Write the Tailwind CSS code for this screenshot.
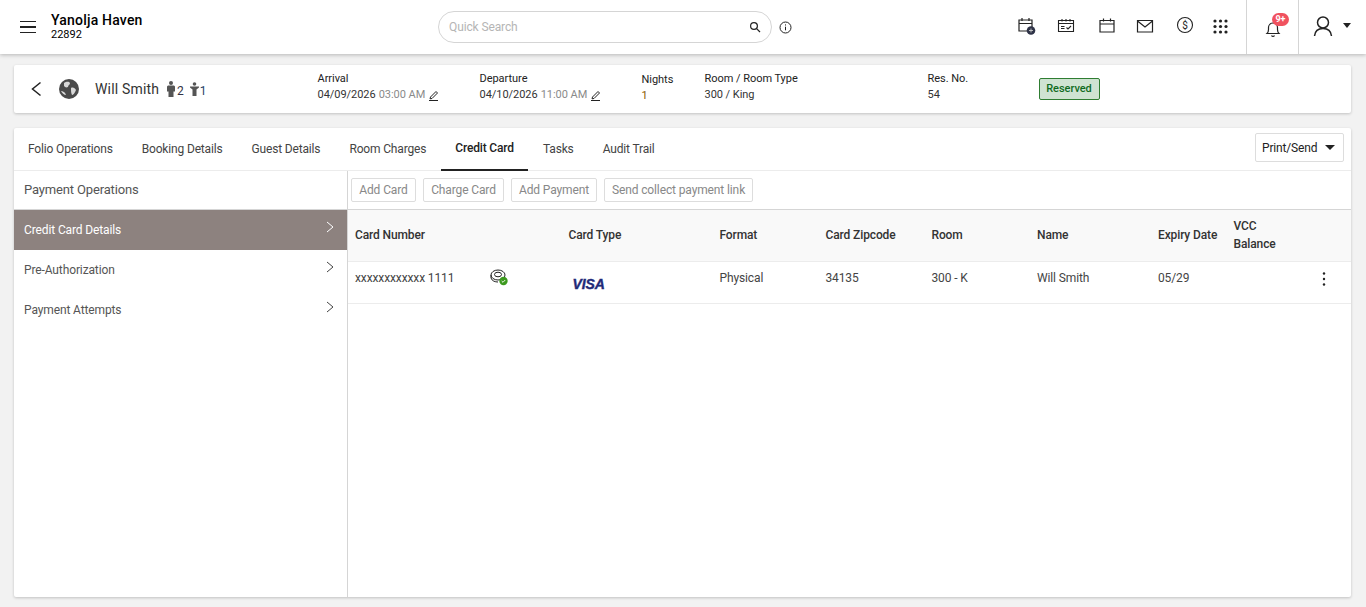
<!DOCTYPE html>
<html lang="en">
<head>
<meta charset="utf-8">
<title>Credit Card</title>
<script src="https://cdn.jsdelivr.net/npm/@tailwindcss/browser@4"></script>
</head>
<body class="h-[607px] w-[1366px] overflow-hidden bg-[#f2f2f2] font-['Roboto',sans-serif] text-[#333]">
<header class="relative z-10 flex h-[54px] items-center bg-white shadow-[0_1px_4px_rgba(0,0,0,0.25)]">
  <button class="ml-5 flex h-5 w-4 flex-col justify-center gap-[4px]">
    <span class="h-[1.5px] w-4 bg-[#222]"></span><span class="h-[1.5px] w-4 bg-[#222]"></span><span class="h-[1.5px] w-4 bg-[#222]"></span>
  </button>
  <div class="ml-[15px] w-[387px] leading-none text-black">
    <div class="text-[14px] font-medium leading-[16px] tracking-[0.2px]">Yanolja Haven</div>
    <div class="text-[11px] leading-[14px]">22892</div>
  </div>
  <div class="flex h-[32px] w-[334px] items-center justify-between rounded-full border border-[#d5d5d5] px-[10px] text-[12px] tracking-[-0.12px] text-[#b5b5b5]">
    <span>Quick Search</span>
    <svg width="12" height="12" viewBox="0 0 12 12" fill="none" stroke="#222" stroke-width="1.2"><circle cx="5" cy="5" r="3.4"/><path d="M7.6 7.6 11 11"/></svg>
  </div>
  <svg class="ml-[7px]" width="13" height="13" viewBox="0 0 13 13" fill="none" stroke="#222"><circle cx="6.5" cy="6.5" r="5.5"/><path d="M6.5 5.7v3.6M6.5 3.4v1.1"/></svg>
  <div class="-mt-[2px] ml-[226px] flex items-center">
    <svg width="18" height="18" viewBox="0 0 18 18" fill="none" stroke="#222" stroke-width="1.2"><path d="M1 3h13v11H1zM1 6.5h13M4 1v3M11 1v3"/><circle cx="13" cy="13.5" r="4.3" fill="#2f3347" stroke="none"/><path d="M11 13.5h4M13 11.5v4" stroke="#ccc" stroke-width=".9"/></svg>
    <svg class="ml-[21px]" width="18" height="18" viewBox="0 0 18 18" fill="none" stroke="#222" stroke-width="1.1"><path d="M1.5 3.5h15v11h-15zM1.5 6.5h15M5 2v2.5M9 2v2.5M13 2v2.5M4 9.5h3.5M4 11.5h3.5M9.5 10.5l1.500 1.500 3-3"/></svg>
    <svg class="ml-[23px]" width="18" height="18" viewBox="0 0 18 18" fill="none" stroke="#222" stroke-width="1.2"><path d="M2 3.5h14V15H2zM2 7h14M5.5 1.5v3M12.5 1.5v3"/></svg>
    <svg class="ml-[20px]" width="18" height="18" viewBox="0 0 18 18" fill="none" stroke="#222" stroke-width="1.2"><path d="M1.5 3.5h15V15h-15zM1.5 4 9 10l7.500-6"/></svg>
    <svg class="-mt-[2px] ml-[22px]" width="18" height="18" viewBox="0 0 18 18" fill="none" stroke="#222" stroke-width="1.1"><circle cx="9" cy="9" r="7.5"/><text x="9" y="12.5" text-anchor="middle" font-size="10" fill="#222" stroke="none" font-family="Roboto">$</text></svg>
    <svg class="ml-[19px]" width="15" height="15" viewBox="0 0 15 15" fill="#222"><circle cx="2" cy="2" r="1.6"/><circle cx="7.5" cy="2" r="1.6"/><circle cx="13" cy="2" r="1.6"/><circle cx="2" cy="7.5" r="1.6"/><circle cx="7.5" cy="7.5" r="1.6"/><circle cx="13" cy="7.5" r="1.6"/><circle cx="2" cy="13" r="1.6"/><circle cx="7.5" cy="13" r="1.6"/><circle cx="13" cy="13" r="1.6"/></svg>
  </div>
  <div class="relative ml-[18px] flex h-[54px] w-[53px] items-center justify-center border-x border-[#d5d5d5]">
    <svg class="mt-[4px]" width="16" height="18" viewBox="0 0 16 18" fill="none" stroke="#222" stroke-width="1.2"><path d="M2 13.5c1-1 1.500-2 1.500-4v-2a4.500 4.500 0 0 1 9 0v2c0 2 .5 3 1.500 4zM6.500 15.500a1.700 1.700 0 0 0 3 0"/></svg>
    <span class="absolute left-[25px] top-[13px] flex h-[13px] w-[17px] items-center justify-center rounded-full bg-[#f0525f] text-[9px] font-bold leading-none text-white">9+</span>
  </div>
  <div class="ml-[14px] flex items-center gap-[10px]">
    <svg class="-mt-[2px]" width="20" height="22" viewBox="0 0 20 22" fill="none" stroke="#222" stroke-width="1.5"><circle cx="10" cy="7.5" r="5.5"/><path d="M1.500 21c.5-5 4-7.500 8.500-7.500s8 2.500 8.500 7.500"/></svg>
    <span class="-mt-[3px] h-0 w-0 border-x-[4px] border-t-[5px] border-x-transparent border-t-[#222]"></span>
  </div>
</header>

<section class="ml-[14px] mr-[15px] mt-[11px] flex h-[48px] items-center rounded-[2px] bg-white text-[11px] leading-[16px] tracking-[-0.04px] shadow-[0_1px_3px_rgba(0,0,0,0.2)]">
  <svg class="ml-[16px]" width="12" height="16" viewBox="0 0 12 16" fill="none" stroke="#222" stroke-width="1.5"><path d="M10.500 1.500 2.500 8l8 6.500"/></svg>
  <svg class="ml-[17px]" width="20" height="20" viewBox="0 0 20 20"><circle cx="10" cy="10" r="10" fill="#4a4a4a"/><path d="M5 4c2-1.500 5-2 6 0 0 2-2 2-2 4-2 1-3 0-4-1zM12 9c2-1 4 0 5 2-1 3-3 5-4 5-1-2-1-4-1-7zM2 12c2 0 4 1 5 4-2 0-4-2-5-4z" fill="#d8d8d8"/></svg>
  <div class="ml-[16px] w-[222.5px] text-[#333]">
    <div class="flex items-center">
      <span class="text-[14px] tracking-[0.17px]">Will Smith</span>
      <svg class="ml-[7px]" width="10" height="16" viewBox="0 0 10 16" fill="#555"><circle cx="5" cy="2" r="2"/><path d="M2 4.500h6l1 1v5H7.500V16h-5v-5.500H1v-5z"/></svg>
      <span class="ml-[1px] mt-[3px] text-[12px] text-[#334]">2</span>
      <svg class="ml-[6px]" width="9" height="14" viewBox="0 0 9 14" fill="#555"><circle cx="4.500" cy="2" r="1.800"/><path d="M0 4.500h9v1L6.500 7.500V14h-4V7.500L0 5.500z"/></svg>
      <span class="ml-[1px] mt-[3px] text-[12px] text-[#1f3f66]">1</span>
    </div>
  </div>
  <div class="mb-[5px] w-[162px]">
    <div class="text-[#222]">Arrival</div>
    <div class="flex items-center text-[#333]">04/09/2026 <span class="ml-[3px] text-[#8a8a8a]">03:00 AM</span>
      <svg class="ml-[3px]" width="12" height="12" viewBox="0 0 12 12" fill="none" stroke="#222"><path d="M2.500 8 8 2.500 9.500 4 4 9.500l-2 .3zM1 11.500h9"/></svg>
    </div>
  </div>
  <div class="mb-[5px] w-[162px]">
    <div class="text-[#222]">Departure</div>
    <div class="flex items-center text-[#333]">04/10/2026 <span class="ml-[3px] text-[#8a8a8a]">11:00 AM</span>
      <svg class="ml-[3px]" width="12" height="12" viewBox="0 0 12 12" fill="none" stroke="#222"><path d="M2.500 8 8 2.500 9.500 4 4 9.500l-2 .3zM1 11.500h9"/></svg>
    </div>
  </div>
  <div class="mb-[2px] w-[63px]">
    <div class="text-[#222]">Nights</div>
    <div class="text-[#8a5a00]">1</div>
  </div>
  <div class="mb-[5px] w-[223px]">
    <div class="text-[#222]">Room / Room Type</div>
    <div>300 / King</div>
  </div>
  <div class="mb-[5px] w-[111px]">
    <div class="text-[#222]">Res. No.</div>
    <div>54</div>
  </div>
  <span class="flex h-[22px] w-[61px] items-center justify-center rounded-[2px] border border-[#2f7d32] bg-[#cfe3d2] font-medium text-[#0f6b1f]">Reserved</span>
</section>

<main class="ml-[14px] mr-[15px] mt-[15px] flex h-[469px] flex-col rounded-[2px] bg-white text-[12px] tracking-[-0.12px] shadow-[0_1px_3px_rgba(0,0,0,0.2)]">
  <nav class="flex h-[43px] shrink-0 items-center border-b border-[#ececec] pl-[14px] pr-[7px] tracking-[-0.16px] text-[#444]">
    <a class="mr-[29px]">Folio Operations</a>
    <a class="mr-[29px]">Booking Details</a>
    <a class="mr-[29px]">Guest Details</a>
    <a class="mr-[29px]">Room Charges</a>
    <a class="-mx-[14px] mr-[15px] flex h-[43px] items-center border-b-2 border-[#222] px-[14px] font-medium text-[#222]">Credit Card</a>
    <a class="mr-[29px]">Tasks</a>
    <a>Audit Trail</a>
    <button class="-mt-[3px] ml-auto flex h-[29px] w-[89px] items-center justify-between rounded-[2px] border border-[#ddd] px-[6px] text-[#222]">Print/Send<span class="mr-[2px] h-0 w-0 border-x-[5px] border-t-[5px] border-x-transparent border-t-[#222]"></span></button>
  </nav>
  <div class="flex min-h-0 flex-1">
    <aside class="w-[334px] shrink-0 border-r border-[#d5d5d5] text-[#555]">
      <div class="flex h-[39px] items-center border-b border-[#d5d5d5] pl-[10px] text-[13px] tracking-[-0.15px]">Payment Operations</div>
      <div class="flex h-[40px] items-center justify-between bg-[#8d827f] pl-[10px] pr-[13px] text-white">Credit Card Details<svg class="-mt-[6px]" width="8" height="12" viewBox="0 0 8 12" fill="none" stroke="#fff"><path d="m1 1 6 5-6 5"/></svg></div>
      <div class="flex h-[40px] items-center justify-between pl-[10px] pr-[13px]">Pre-Authorization<svg class="-mt-[6px]" width="8" height="12" viewBox="0 0 8 12" fill="none" stroke="#444"><path d="m1 1 6 5-6 5"/></svg></div>
      <div class="flex h-[40px] items-center justify-between pl-[10px] pr-[13px]">Payment Attempts<svg class="-mt-[6px]" width="8" height="12" viewBox="0 0 8 12" fill="none" stroke="#444"><path d="m1 1 6 5-6 5"/></svg></div>
    </aside>
    <div class="min-w-0 flex-1">
      <div class="flex h-[39px] items-center gap-[7px] border-b border-[#d5d5d5] pl-[3px] text-[#888]">
        <button class="h-[24px] w-[65px] rounded-[2px] border border-[#ddd]">Add Card</button>
        <button class="h-[24px] w-[81px] rounded-[2px] border border-[#ddd]">Charge Card</button>
        <button class="h-[24px] w-[86px] rounded-[2px] border border-[#ddd]">Add Payment</button>
        <button class="h-[24px] w-[149px] rounded-[2px] border border-[#ddd]">Send collect payment link</button>
      </div>
      <div class="grid h-[52px] grid-cols-[213.5px_151px_106px_106px_105.5px_121px_75.5px_1fr] items-center border-b border-[#ececec] bg-[#f9f9f9] pb-[2px] font-medium leading-[18px] text-[#333] [&>div]:pl-[7px]">
        <div>Card Number</div><div>Card Type</div><div>Format</div><div>Card Zipcode</div><div>Room</div><div>Name</div><div>Expiry Date</div><div>VCC<br>Balance</div>
      </div>
      <div class="grid h-[42px] grid-cols-[213.5px_151px_106px_106px_105.5px_121px_75.5px_1fr] items-center border-b border-[#ececec] text-[#444] [&>div]:pl-[7px]">
        <div class="relative -mt-[9px]">xxxxxxxxxxxx 1111
          <svg class="absolute left-[142px] top-[-1px]" width="19" height="19" viewBox="0 0 19 19" fill="none" stroke="#222"><ellipse cx="8" cy="7" rx="7" ry="5"/><ellipse cx="8" cy="6.500" rx="3.500" ry="2.300"/><path d="M1 7v3c1 3 4 4 7 4"/><circle cx="13.500" cy="13" r="4.200" fill="#3d9a1f" stroke="none"/><path d="m11.700 13 1.300 1.300 2.200-2.300" stroke="#fff" stroke-width=".9"/></svg>
        </div>
        <div class="pt-[4px]"><span class="ml-[4px] font-['Liberation_Sans',sans-serif] text-[14px] font-bold italic leading-none text-[#1f2a78] [-webkit-text-stroke:0.4px_#1f2a78]">VISA</span></div>
        <div class="-mt-[9px]">Physical</div><div class="-mt-[9px]">34135</div><div class="-mt-[9px]">300 - K</div><div class="-mt-[9px]">Will Smith</div><div class="-mt-[9px]">05/29</div>
        <div class="relative -mt-[9px]"><svg class="absolute right-[25px] top-[-7px]" width="4" height="16" viewBox="0 0 4 16" fill="#222"><circle cx="2" cy="2.500" r="1.200"/><circle cx="2" cy="8" r="1.200"/><circle cx="2" cy="13.500" r="1.200"/></svg></div>
      </div>
    </div>
  </div>
</main>
</body>
</html>
